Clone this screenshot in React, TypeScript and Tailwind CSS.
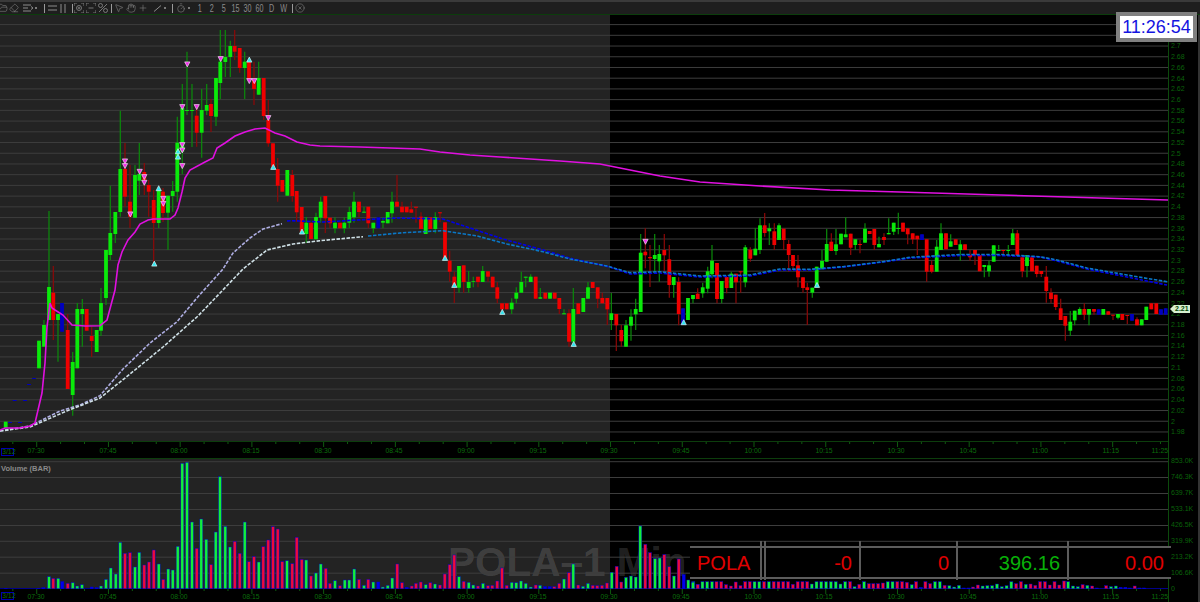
import type { ReactNode } from "react";
import { Hand, MousePointer2, Plus, Timer, CircleX, Eraser, FolderOpen } from "lucide-react";

// [x, kind, body top, body bottom, wick top, wick bottom] in page pixels
type Candle = [number, "g" | "r" | "b", number, number, number?, number?];

const CANDLES: Candle[] = [
  [5.7, "g", 421.7, 427.7], [10, "b", 422, 423], [14.7, "b", 400, 401], [20, "b", 422, 423], [25, "b", 400, 401],
  [29, "b", 384, 385], [34, "b", 378, 379],
  [39, "g", 340.7, 368.3], [44, "g", 325, 346.7, 320], [49, "g", 287, 320, 211], [53.3, "r", 292.7, 320, 266, 340],
  [58, "g", 314, 320, 314, 361.7], [62, "b", 303, 331.7, 303, 331.7], [67.7, "r", 330, 389, 314], [72.7, "g", 362, 395, 352, 415.7],
  [77.3, "g", 309, 368.3, 303], [82.3, "g", 309, 314, 299, 346.7], [86.7, "r", 309, 330.7], [91.7, "r", 336, 341, 326.7, 357],
  [96.7, "g", 330, 352], [101, "g", 303, 330.7, 288, 336], [106, "g", 250, 298, 250, 305],
  [110.3, "g", 233, 255, 185.7, 260], [115.3, "g", 212, 234, 212, 243], [120.3, "g", 169, 212, 110.7, 216.7], [125, "r", 169, 196.7, 143, 206.7],
  [130, "r", 201.7, 216.7, 165, 228], [135, "g", 175, 217.7, 165], [139.3, "g", 174, 180.7, 143, 195], [144.3, "r", 172, 180, 163, 195],
  [148.7, "r", 185, 191.7, 180, 216.7], [153.7, "r", 200, 223, 190, 265], [158.7, "g", 190, 223, 188, 228], [163, "r", 191.7, 213, 188, 222],
  [168, "g", 195.7, 212.7, 195.7, 250], [172.7, "g", 191, 196, 181, 211.7], [177.3, "g", 142.7, 191.7, 116.7, 201.7], [182.3, "g", 108, 151.7, 84, 174],
  [187, "g", 110, 111, 51.7, 115], [192, "g", 110, 111, 84, 147], [196.7, "r", 115.7, 132.7, 107, 146.7], [201.7, "g", 110, 132.7, 89, 157.7],
  [206.7, "g", 105, 110.7, 84, 115], [211, "r", 104, 116, 99, 132], [216, "g", 78, 116.7, 78, 126], [220.3, "g", 61.7, 83, 30, 99],
  [225.3, "g", 57, 62, 30, 77], [230.3, "g", 46, 57, 40.7, 77], [234.7, "r", 46, 51.7, 30, 60], [239.7, "r", 48, 68, 48, 72.7],
  [244.7, "g", 61.7, 68, 51.7, 99], [249, "r", 61.7, 79.3], [254, "r", 80, 89, 61.7, 105], [258.7, "g", 78, 94.7, 61.7],
  [263.7, "r", 78, 116, 78, 120], [268.3, "r", 120, 143.3, 100, 146.7], [273, "r", 143.3, 166.7], [277.7, "r", 169, 185.7, 158, 201.7],
  [282.3, "r", 180, 191.7], [287.3, "g", 170, 195.7], [292.3, "r", 175, 196, 170, 201.7], [296.7, "r", 191, 212.3, 191, 221.7],
  [301.7, "r", 207, 231.7], [306.3, "g", 222.7, 234, 217, 243], [311, "r", 222.7, 239], [316, "g", 217, 239.3, 212.7],
  [320.7, "g", 201.7, 217.7, 196.7, 222.7], [325.3, "r", 196, 218.3, 196, 233], [330, "r", 217.7, 223.3, 217.7, 228], [335, "g", 222.7, 228.3, 217.3, 233.3],
  [340, "r", 222.7, 228.3], [344.3, "g", 222.7, 228.3, 217.3, 233.3], [349.3, "g", 212, 222.7, 206.7, 228], [354, "g", 201.7, 217.3, 191.7, 222.7],
  [359, "r", 201.7, 212, 201.7, 217.3], [364, "g", 211.7, 212.7, 206.7, 212.7], [368.3, "r", 206.7, 223.3, 206.7, 228.3], [373.3, "g", 222.7, 228.3, 222.7, 233.3],
  [378.3, "b", 217.3, 228.3, 217.3, 228.3], [383, "g", 221, 222.7, 217.3, 228.3], [387.7, "g", 212, 223.3], [392, "g", 201.7, 213.3, 191.7, 222.7],
  [397, "r", 201.7, 206.7, 175], [402, "r", 206.7, 212.3, 201.7], [406.7, "r", 206.7, 212.3, 206.7, 212.3], [411.3, "r", 209.3, 212.7, 201.7],
  [416, "r", 206.7, 207.7, 206.7, 222.7], [421, "r", 216.7, 229, 212.3], [425.7, "g", 217.3, 234], [430.3, "r", 217.3, 229],
  [435.3, "g", 217.3, 229, 212.3, 233.3], [440, "r", 212.3, 213.3, 212.3, 222.3], [445, "r", 222.3, 258.3], [449.7, "r", 260.7, 271.7, 250.7, 281.7],
  [454.3, "r", 276.7, 286.7, 271.7, 303], [459, "g", 266, 287.7, 266, 292.7], [463.7, "r", 265.3, 282, 265.3, 292.7], [468.7, "g", 282, 288, 271, 292.7],
  [473.3, "g", 281.3, 282, 276.7, 287.3], [478, "r", 276.7, 282, 276.7, 287.3], [482.7, "g", 271, 282, 266], [488, "r", 271.3, 276.7, 271.3, 281.7],
  [492.7, "r", 276.7, 287.3], [497.3, "r", 287.3, 298.7, 282, 303.3], [502, "r", 303.3, 309.3, 303.3, 314], [506.7, "r", 303.3, 309.3],
  [511.7, "g", 302.7, 309.3, 298.3, 314], [516.3, "g", 292.7, 298.7, 287.3, 303.3], [521.3, "g", 282, 292.7, 271.7], [525.7, "g", 276.7, 277.7, 276.7, 287.3],
  [530.7, "g", 276.7, 282, 274.3], [535.7, "r", 276.7, 298.7], [540.3, "g", 297.3, 298.7, 288, 298.7], [545.3, "r", 292.7, 298.7],
  [550, "g", 292.7, 298.7], [554.7, "r", 292.7, 298.7], [559.3, "r", 298, 309, 298, 314], [564, "g", 313.3, 314.3, 309.3],
  [569, "r", 313.3, 341.7, 309.3, 346.7], [573.3, "g", 309, 341.7, 288, 346], [578.3, "r", 303.3, 314], [583.3, "g", 298, 312],
  [588, "g", 287.3, 298.7, 282], [592.7, "r", 282, 288], [597.7, "r", 287.3, 298.7, 287.3, 308.3], [602.3, "r", 298, 303.3, 292.7], [607.3, "r", 298, 309.3, 298, 325],
  [611.3, "g", 313.3, 320, 293, 330], [616.3, "r", 314, 325.3, 314, 351], [621.3, "r", 330, 341.3, 325, 346.7], [626, "g", 325.3, 346.7, 320],
  [631, "g", 316.7, 325.7, 309.3, 340.7], [635.7, "g", 309, 314.3, 298.7, 330], [640.7, "g", 252.7, 312, 234], [645.3, "r", 251.7, 255.3, 228.3, 268.3],
  [650, "r", 257, 258.3, 245, 287], [654.7, "g", 255, 259, 234, 272], [659.3, "g", 254, 261.3, 245, 281.7], [664.3, "r", 250, 255.3, 234, 272],
  [669.3, "r", 259.3, 285, 245, 297.7], [673.7, "g", 277, 285, 277, 297.7], [678.7, "r", 282, 314, 277.3, 325.3], [683, "b", 308.3, 325, 308.3, 325],
  [688, "g", 298, 320], [693, "g", 295, 299, 295, 303.3], [697.7, "r", 293.7, 299, 288.3], [702.7, "g", 287.3, 293.3, 282.7, 297.7],
  [707.7, "g", 271.3, 288.7, 266.7, 293.3], [712, "g", 260.7, 274.3, 245, 278.3], [717, "r", 263, 299, 263, 303.3], [721.7, "g", 281, 299, 281, 303.3],
  [726.7, "r", 277, 288, 277, 293.3], [731.3, "g", 273.7, 288, 271.7], [736, "r", 273.7, 282.3, 273.7, 303.3], [740.7, "r", 271.3, 272.3, 271.3, 292.7],
  [745.3, "g", 247.3, 282.3, 245, 287.3], [750.3, "r", 249.7, 258.7, 247.3, 261.7], [755.3, "g", 248.7, 255.3, 228.3], [760, "g", 225.3, 250, 218.3, 254],
  [764.7, "r", 225.3, 233, 213, 236.7], [769.3, "g", 228.3, 231.3, 223.3, 245], [774.3, "r", 231.3, 245, 223.3, 250], [779, "g", 225.3, 240, 223.3],
  [783.7, "r", 228.7, 240, 228.7, 250], [788.7, "r", 244, 255, 240, 271.7], [793, "r", 255, 266, 255, 268], [798, "r", 265.3, 277.3, 255, 287.3],
  [803, "r", 277.3, 288, 277.3, 292.7], [807.3, "r", 287.3, 290, 282.7, 325], [812.3, "g", 287.7, 292.7, 287.7, 297.7], [816.7, "g", 266.7, 287.3],
  [822, "g", 261, 269.3, 250], [826.7, "g", 244, 261.7, 229], [831.3, "r", 241.7, 251, 233.3], [836, "g", 244.3, 251, 229, 255],
  [841, "g", 233.7, 244.3], [845.7, "g", 234.3, 237.3, 217.3], [850.7, "r", 233.7, 247.7, 233.7, 255], [855.3, "g", 239.3, 245, 239.3, 250],
  [860, "r", 244, 245, 240, 253.3], [865, "g", 228.7, 242.7, 223.3], [869.7, "r", 231, 234], [874.3, "r", 229, 245, 229, 250],
  [879, "g", 244, 247.3, 236.7], [884, "r", 237, 240, 233.3, 245], [888.7, "g", 233, 234.3, 218.3, 234.3], [893.7, "g", 222.7, 231.7, 222.7, 235],
  [898.3, "g", 228, 229, 212.7, 234.3], [903, "r", 222.7, 231.7], [907.7, "r", 228.3, 234.3, 228.3, 244.3],
  [912.7, "r", 233.3, 239.3, 233.3, 244], [917.3, "r", 235.7, 239.3, 235.7, 255], [922, "b", 234.3, 240, 234.3, 240], [926.7, "r", 239.3, 271.7, 239.3, 281.7],
  [931.7, "r", 265, 271.7, 260.7, 273.3], [936.7, "g", 246.7, 271.7, 240], [941, "g", 233.3, 250, 223.3], [946, "r", 233.3, 249.3],
  [950.7, "g", 241.3, 246.7, 234.3], [955.7, "r", 239.3, 245], [960.3, "g", 244.3, 250, 240, 260.7], [965, "r", 244.3, 250],
  [970, "r", 255, 257.3, 250, 260.7], [975, "r", 250, 255, 250, 265], [979.7, "r", 255, 271.3], [984.3, "g", 265, 267, 265, 277.3],
  [989, "g", 265.3, 271.3, 260.7, 276.7], [993.7, "g", 245.3, 261.7], [998.7, "g", 250, 251, 245], [1003.3, "r", 250, 251, 250, 255],
  [1008.3, "g", 250, 251, 245, 255], [1012.7, "g", 233.3, 245, 229], [1017.3, "r", 233.3, 255, 230], [1022.3, "r", 257.3, 271.3, 257.3, 277.3],
  [1027, "g", 255, 266, 255, 277.3], [1032, "r", 257.3, 271.3], [1036.7, "r", 265.7, 274, 265.7, 277.3], [1041.3, "r", 271, 274, 271, 277],
  [1046.3, "r", 276.7, 291, 266, 302.7], [1051, "r", 292.7, 299, 288.3, 303.3], [1055.7, "r", 294.7, 307, 294.7, 310], [1060.7, "r", 308.3, 320, 298.7],
  [1065.3, "r", 316, 325.7, 316, 340.7], [1070.3, "g", 321.7, 330.7, 311, 336], [1074.7, "g", 310.7, 320.3, 310.7, 325.3], [1079.7, "g", 309, 314.7, 307.3],
  [1084.3, "r", 309, 314.7, 303.3, 320], [1089, "g", 309, 314.7, 309, 325.3], [1094, "r", 309, 311.7, 309, 314.7], [1098.7, "b", 309.3, 314.7, 309.3, 314.7],
  [1103.3, "g", 309, 314.7], [1108.3, "r", 311.3, 314.7], [1113, "r", 314.7, 315.7, 314.7, 320], [1118, "g", 314, 317.7, 314, 319.3],
  [1122.3, "r", 314, 320], [1127.3, "r", 315, 316, 315, 324], [1132, "b", 314, 320.7, 314, 320.7], [1137, "r", 319.3, 325.3, 317.3],
  [1141.7, "g", 319.3, 325.3], [1146.3, "g", 306.7, 320], [1151.3, "r", 303.3, 309.3], [1156.3, "r", 303.3, 314],
  [1161, "b", 309.3, 314.7, 309.3, 314.7], [1165.7, "b", 308.3, 314.7, 308.3, 314.7],
];

const FLAGS_DOWN = [
  [187.3, 64.3], [182.3, 107], [196.7, 107], [220.7, 59], [125, 161.3], [125, 166], [139.7, 171.7], [144.3, 177], [144.3, 182.7],
  [130.3, 214.3], [163.3, 198.7], [163.3, 203.7], [182.3, 145], [182.3, 150.3], [182.3, 166], [249.3, 81], [254.3, 81], [268.3, 118], [645.5, 241.7],
];
const FLAGS_UP = [
  [154.3, 263.7], [158.7, 188.3], [178, 151.3], [178, 156.7], [249.3, 59.7], [273.3, 167], [302, 231.7], [445, 258], [454.3, 285],
  [502.3, 312], [573.7, 344], [683.7, 322.3], [817, 285],
];

const MAGENTA =
  "0,430 5,428 20,428 30,426 35,423 42,393 45,363 47,327 50,303 52,308 55,310 63,315 72,325 85,326 100,325.7 107,320 115,290 118,265 122,252 128,240 135,232 140,224 148,220 153,219 170,219 175,215 178,208 182,192 185,178 190,170 205,162 213,158 217,148 225,143 235,136 245,132 255,129 265,128 275,133 285,136 297,142 310,145 320,146 360,147 420,149 440,152 470,155 500,157 560,161 600,164 620,168 660,176 700,182 760,186 830,190 900,192 1000,195 1100,198 1168,200";
const UPPER_PRE = "0,431 30,426 60,411 80,405 100,395.7 123,369 150,343 177,321.7 198,296.7 223,269 233,253 250,238 263,229 282,223.7";
const LOWER_PRE = "0,431 30,427 66.7,411 100,398 126.7,376.7 163,347 198,316 243,269 267,250 293,244 320,240.7 363,236.7";
const BLUE =
  "287,221 291.7,220.7 323,222 357,220 397,218 443,219 467,227 503,239 543,250 573,259 610,267 630,274 660,273 700,277 750,276 780,270 810,270 843,267 883,262 910,258 960,255.5 1000,255.5 1040,257 1057,261 1087,269 1127,277 1167,285";
const TEAL =
  "368,236 403,232.7 443,230.7 477,236 507,244 543,251.7 570,259 607,266 630,272.7 660,271.7 700,276 750,275 780,269 810,269.3 843,266.7 883,261.7 910,257.3 960,254.5 1000,254.5 1040,256.7 1057,260 1087,268 1127,275 1167,281.7";

type Vol = [number, number, "g" | "r" | "b"];

const volLeft: Vol[] = [
  [18, 445, "b"], [115, 445, "b"], [130, 443, "b"], [147, 410, "g"], [160, 415, "r"], [175, 415, "g"], [187, 425, "b"], [203, 430, "r"], [218, 428, "g"], [232, 438, "g"], [246, 434, "g"],
  [275, 441, "b"], [290, 443, "b"], [303, 438, "g"], [318, 418, "g"], [332, 384, "g"], [347, 402, "g"], [361, 307, "g"], [375, 340, "r"], [390, 338, "r"], [405, 381, "g"], [418, 337, "g"],
  [433, 375, "r"], [447, 366, "r"], [461, 330, "r"], [476, 372, "g"], [490, 418, "r"], [505, 387, "g"], [518, 390, "g"], [533, 319, "g"], [547, 70, "g"], [561, 67, "g"], [576, 246, "g"],
  [590, 325, "r"], [604, 237, "g"], [619, 298, "g"], [633, 374, "r"], [647, 276, "g"], [660, 110, "g"], [676, 259, "g"], [690, 321, "g"], [704, 304, "r"], [719, 340, "r"], [734, 246, "g"],
  [747, 365, "r"], [762, 350, "r"], [776, 366, "g"], [790, 320, "r"], [805, 300, "r"], [819, 260, "r"], [833, 267, "r"], [847, 365, "r"], [861, 362, "g"], [877, 371, "r"], [890, 292, "r"],
  [905, 358, "r"], [919, 360, "g"], [933, 408, "r"], [948, 399, "g"], [962, 372, "g"], [977, 385, "r"], [990, 430, "r"], [1005, 422, "g"], [1020, 437, "r"], [1034, 420, "g"], [1048, 420, "g"],
  [1063, 387, "g"], [1077, 418, "r"], [1092, 436, "g"], [1105, 418, "r"], [1120, 426, "g"], [1135, 426, "b"], [1148, 441, "g"], [1163, 436, "g"], [1177, 414, "g"], [1192, 372, "r"],
];
const volMid: Vol[] = [
  [6, 248, "r"], [20, 262, "b"], [35, 258, "r"], [48, 250, "r"], [62, 246, "r"], [77, 254, "g"], [91, 248, "r"], [105, 252, "g"], [120, 255, "r"], [134, 222, "r"], [149, 194, "r"], [163, 165, "r"],
  [177, 230, "g"], [191, 244, "r"], [206, 247, "g"], [220, 255, "g"], [234, 258, "r"], [249, 250, "g"], [264, 257, "r"], [277, 256, "r"], [292, 243, "r"], [306, 204, "r"], [320, 256, "r"], [335, 247, "g"],
  [349, 248, "g"], [363, 243, "g"], [377, 250, "g"], [392, 261, "g"], [407, 255, "r"], [420, 256, "g"], [435, 260, "b"], [449, 260, "b"], [463, 260, "r"], [478, 250, "r"], [492, 237, "g"], [507, 218, "r"],
  [520, 192, "g"], [535, 255, "r"], [549, 259, "g"], [564, 250, "g"], [578, 256, "r"], [592, 257, "r"], [606, 256, "r"], [621, 249, "r"], [635, 217, "g"], [650, 199, "r"], [664, 246, "r"], [678, 232, "g"],
  [693, 228, "g"], [707, 231, "g"], [721, 78, "g"], [736, 133, "r"], [750, 158, "r"], [765, 176, "g"], [779, 174, "g"], [793, 164, "r"], [808, 200, "r"], [822, 228, "g"], [836, 177, "r"], [851, 224, "b"],
  [865, 240, "g"], [880, 245, "g"], [893, 253, "r"],
];
const volRight: Vol[] = [
  [96, 428, "g"], [110, 434, "r"], [124, 425, "g"], [138, 425, "g"], [152, 425, "g"], [165, 425, "r"], [179, 425, "r"], [193, 434, "r"], [207, 438, "r"], [221, 426, "r"], [235, 437, "r"], [249, 425, "r"],
  [262, 425, "r"], [276, 425, "g"], [290, 425, "g"], [304, 425, "r"], [318, 425, "g"], [332, 425, "r"], [346, 425, "r"], [360, 425, "r"], [374, 425, "r"], [388, 433, "r"], [402, 425, "r"], [416, 425, "r"],
  [430, 425, "r"], [443, 432, "g"], [457, 425, "g"], [471, 425, "g"], [485, 425, "g"], [499, 425, "g"], [513, 425, "g"], [527, 432, "g"], [541, 425, "g"], [555, 425, "r"], [568, 440, "g"], [582, 433, "r"],
  [596, 425, "g"], [610, 431, "r"], [623, 431, "r"], [637, 431, "r"], [651, 429, "r"], [665, 425, "g"], [679, 425, "g"], [693, 425, "r"], [707, 425, "r"], [721, 427, "r"], [735, 434, "g"], [748, 425, "r"],
  [762, 442, "b"], [775, 425, "r"], [789, 431, "r"], [803, 425, "g"], [817, 425, "g"], [831, 436, "r"], [845, 437, "g"], [859, 441, "g"], [873, 436, "g"], [887, 444, "b"], [901, 444, "b"], [914, 441, "r"],
  [928, 435, "r"], [942, 438, "g"], [956, 437, "g"], [970, 437, "g"], [984, 432, "g"], [998, 440, "g"], [1012, 437, "g"], [1026, 425, "g"], [1040, 431, "r"], [1054, 425, "r"], [1068, 433, "g"], [1082, 432, "r"],
  [1096, 436, "r"], [1110, 425, "r"], [1124, 425, "r"], [1138, 435, "r"], [1152, 425, "r"], [1166, 435, "r"], [1180, 423, "r"], [1192, 425, "g"], [1206, 438, "g"], [1220, 440, "g"], [1234, 434, "r"], [1248, 436, "g"],
  [1262, 438, "r"], [1276, 444, "b"], [1303, 437, "r"], [1317, 440, "g"], [1331, 438, "g"], [1345, 442, "b"], [1359, 442, "b"], [1372, 444, "b"], [1386, 438, "r"], [1400, 444, "b"], [1414, 444, "b"],
];

const VOLUME_BARS: Vol[] = [
  ...volLeft.map(([x, y, k]): Vol => [x / 3, 440 + y / 3, k]),
  ...volMid.map(([x, y, k]): Vol => [400 + x / 3, 500 + y / 3, k]),
  ...volRight.map(([x, y, k]): Vol => [660 + x / 2.92, 440 + y / 3, k]),
];

const PRICE_ROWS = Array.from({ length: 37 }, (_, i) => String(parseFloat((2.7 - i * 0.02).toFixed(2))));
const VOLUME_LABELS = ["853.0K", "746.3K", "639.7K", "533.1K", "426.5K", "319.9K", "213.2K", "106.6K", "0"];
const TIMES = ["07:30", "07:45", "08:00", "08:15", "08:30", "08:45", "09:00", "09:15", "09:30", "09:45", "10:00", "10:15", "10:30", "10:45", "11:00", "11:15"];

const BODY = { g: "#0aea0a", r: "#f00000", b: "#0000c0" };
const WICK = { g: "#0a8c0a", r: "#8e0808", b: "#000088" };
const VOL_FILL = { g: "#12f03a", r: "#ee0a3c", b: "#0000ee" };

function CandleChart() {
  const grid = Array.from({ length: 39 }, (_, i) => 24.6 + i * 10.72);
  return (
    <svg width={1168} height={426} viewBox="0 15 1168 426" className="block">
      <rect x={0} y={15} width={610} height={426} fill="#232323" />
      {grid.map((y) => (
        <line key={y} x1={0} x2={1168} y1={y} y2={y} stroke="#3d3d3d" />
      ))}
      {CANDLES.map(([x, k, top, bottom, wickTop, wickBottom]) => (
        <g key={x}>
          <line x1={x} x2={x} y1={wickTop ?? top} y2={wickBottom ?? bottom} stroke={WICK[k]} strokeWidth={1.2} />
          <rect x={x - 1.9} y={top} width={3.8} height={bottom - top} fill={BODY[k]} />
        </g>
      ))}
      <polyline points={UPPER_PRE} fill="none" stroke="#aeaee2" strokeWidth={1.6} strokeDasharray="3.5 1.5" />
      <polyline points={LOWER_PRE} fill="none" stroke="#cfe0e6" strokeWidth={1.6} strokeDasharray="3.5 1.5" />
      <polyline points={BLUE} fill="none" stroke="#0000e6" strokeWidth={1.6} strokeDasharray="3.5 1.5" />
      <polyline points={TEAL} fill="none" stroke="#0a78c8" strokeWidth={1.6} strokeDasharray="3.5 1.5" />
      <polyline points={MAGENTA} fill="none" stroke="#e010e0" strokeWidth={1.6} />
      {FLAGS_DOWN.map(([x, y]) => (
        <polygon key={`${x}-${y}`} points={`${x - 2.6},${y - 2.4} ${x + 2.6},${y - 2.4} ${x},${y + 2.6}`} fill="#f02ee8" stroke="#f4d8f4" strokeWidth={0.7} />
      ))}
      {FLAGS_UP.map(([x, y]) => (
        <polygon key={`${x}-${y}`} points={`${x - 2.6},${y + 2.4} ${x + 2.6},${y + 2.4} ${x},${y - 2.6}`} fill="#2ee6f0" stroke="#d8f4f4" strokeWidth={0.7} />
      ))}
    </svg>
  );
}

function VolumeChart() {
  const grid = [461.7, 477.5, 493.5, 509.5, 525.5, 541.3, 557.2, 573.2];
  return (
    <svg width={1168} height={130} viewBox="0 459 1168 130" className="absolute inset-0 block">
      {grid.map((y) => (
        <line key={y} x1={0} x2={1168} y1={y} y2={y} stroke="#3d3d3d" />
      ))}
      <line x1={0} x2={1168} y1={588.5} y2={588.5} stroke="#00008a" />
      {VOLUME_BARS.map(([x, y, k]) => (
        <rect key={x} x={x - 1.5} y={y} width={3} height={588.7 - y} fill={VOL_FILL[k]} stroke="#0000d0" strokeWidth={0.45} />
      ))}
    </svg>
  );
}

function TimeAxis({ className }: { className: string }) {
  const ticks = Array.from({ length: 49 }, (_, i) => 36.7 - 23.9 + i * 23.91);
  return (
    <div className={`relative flex w-[1168px] ${className}`}>
      <svg width={1168} height={6} className="absolute left-0 top-0">
        {ticks.map((x, i) => (
          <line key={x} x1={x} x2={x} y1={0} y2={(i + 2) % 3 === 0 ? 5 : 2} stroke="#0f5a0f" />
        ))}
      </svg>
      <span className="absolute left-px bottom-[2px] h-[8px] w-[13px] border border-[#0000b0] text-center text-[7px] leading-[6px] text-[#0a6a0a]">3/12</span>
      {TIMES.map((t) => (
        <span key={t} className="w-[71.7px] shrink-0 text-center text-[8px] leading-none text-[#0b6e0b] first:ml-px">
          <span className="inline-block scale-x-[.85]">{t}</span>
        </span>
      ))}
      <span className="w-[26px] shrink-0 text-center text-[8px] leading-none text-[#0b6e0b]">
        <span className="inline-block scale-x-[.85]">11:25</span>
      </span>
    </div>
  );
}

function Cell({ children, className = "" }: { children: ReactNode; className?: string }) {
  return <span className={`flex h-full w-3 shrink-0 items-center justify-center text-[10px] text-[#8c8c8c] ${className}`}>{children}</span>;
}

function Sep({ className = "" }: { className?: string }) {
  return <span className={`h-[9px] w-px shrink-0 bg-[#9a9a9a] ${className}`} />;
}

function Dot() {
  return <span className="flex h-full w-1 shrink-0 items-center justify-center"><span className="h-[2px] w-[2px] rounded-full bg-[#9a9a9a]" /></span>;
}

function Num({ label }: { label: string }) {
  return (
    <Cell>
      <span className="inline-block scale-x-[.72]">{label}</span>
    </Cell>
  );
}

function Toolbar() {
  const icon = { size: 10, strokeWidth: 1.3 };
  return (
    <div className="flex h-[15px] items-center overflow-hidden border-t-2 border-b border-t-[#3a3a3a] border-b-[#0c3d0c] bg-[#1e1e1e]">
      <Cell className="-ml-[3px]"><FolderOpen {...icon} /></Cell>
      <Cell className="-ml-px"><Eraser {...icon} /></Cell>
      <Cell className="ml-[2px]">
        <svg width="10" height="8" viewBox="0 0 10 8" fill="none" stroke="currentColor"><path d="M0 1h8M0 4h5M0 7h8M8 2.5l2 1.5-2 1.5" /></svg>
      </Cell>
      <Dot />
      <Sep className="ml-[6px]" />
      <Cell className="ml-px">
        <svg width="9" height="6" viewBox="0 0 9 6" fill="none" stroke="currentColor"><path d="M0 1h9M0 5h9" /></svg>
      </Cell>
      <Cell className="-ml-px">
        <svg width="6" height="9" viewBox="0 0 6 9" fill="none" stroke="currentColor"><path d="M1 0v9M5 0v9" /></svg>
      </Cell>
      <Sep className="ml-[3px]" />
      <Cell>
        <svg width="10" height="10" viewBox="0 0 10 10" fill="none" stroke="currentColor" strokeWidth=".8"><path d="M0 3V0h3M7 0h3v3M0 7v3h3M7 10h3V7" /><circle cx="5" cy="5" r="2.5" /><path d="M3.8 5h2.4M5 3.8v2.4" /></svg>
      </Cell>
      <Cell>
        <svg width="10" height="10" viewBox="0 0 10 10" fill="none" stroke="currentColor" strokeWidth=".8"><path d="M0 3V0h3M7 0h3v3M0 7v3h3M7 10h3V7M2.5 5h5" /></svg>
      </Cell>
      <Cell>
        <svg width="10" height="10" viewBox="0 0 10 10" fill="none" stroke="currentColor" strokeWidth=".8"><path d="M1 9L9 1" /><circle cx="2.5" cy="2.5" r="2" /><circle cx="7.5" cy="7.5" r="2" /></svg>
      </Cell>
      <Sep className="ml-[2px]" />
      <Cell className="ml-px"><MousePointer2 {...icon} /></Cell>
      <Cell><Hand {...icon} /></Cell>
      <Cell><Plus {...icon} /></Cell>
      <Cell className="ml-[2px]">
        <svg width="9" height="7" viewBox="0 0 9 7" fill="none" stroke="currentColor"><path d="M1 6.5L8 .5" /></svg>
      </Cell>
      <Dot />
      <Sep className="ml-[5px]" />
      <Cell className="ml-[2px]"><Timer {...icon} /></Cell>
      <Dot />
      <span className="ml-[3px] flex h-full">
        {["1", "2", "5", "15", "30", "60", "D", "W"].map((n) => (
          <Num key={n} label={n} />
        ))}
      </span>
      <Sep className="ml-[2px]" />
      <Cell className="ml-px"><CircleX {...icon} /></Cell>
    </div>
  );
}

function Tick() {
  return <span className="absolute -top-[7px] -bottom-[3px] left-0 w-[2px] bg-[#5c5c5c]" />;
}

function QuoteCell({ children, width, className }: { children: ReactNode; width: string; className: string }) {
  return (
    <div className={`relative flex h-full items-center justify-end pr-[7px] text-[20px] leading-none ${width} ${className}`}>
      <Tick />
      {children}
    </div>
  );
}

function QuoteBar() {
  return (
    <div className="absolute left-[690px] top-[87px] flex h-[33px] w-[481px] border-y-2 border-[#5c5c5c] bg-black">
      <div className="flex h-full w-[70px] items-center pl-[7px] text-[20px] leading-none text-[#e00000]">POLA</div>
      <div className="relative h-full w-[4px]"><Tick /></div>
      <QuoteCell width="w-[95px]" className="text-[#e00000]">-0</QuoteCell>
      <QuoteCell width="w-[97px]" className="text-[#e00000]">0</QuoteCell>
      <QuoteCell width="w-[111px]" className="text-[#08b008]">396.16</QuoteCell>
      <QuoteCell width="flex-1" className="text-[#e00000]">0.00</QuoteCell>
    </div>
  );
}

export default function App() {
  return (
    <div className="relative h-[602px] w-[1200px] overflow-hidden bg-black font-['Liberation_Sans',Arial,sans-serif]">
      <Toolbar />

      <div className="flex">
        <div className="w-[1168px] shrink-0">
          <CandleChart />
          <TimeAxis className="h-[18px] items-center border-y border-[#0c3d0c] pt-[2px]" />
          <div className="relative h-[130px] w-[1168px] bg-[linear-gradient(to_right,#232323_610px,#000_610px)]">
            <span className="absolute left-[448px] top-[83px] text-[40.5px] font-bold leading-none whitespace-nowrap text-white/15">POLA–1 Min</span>
            <VolumeChart />
            <span className="absolute left-[1px] top-[4px] text-[7.5px] font-bold text-[#8a8a8a]">Volume (BAR)</span>
            <QuoteBar />
          </div>
          <TimeAxis className="h-[13px] items-end pb-px" />
        </div>

        <div className="flex-1 border-l border-r-2 border-l-[#0c4a0c] border-r-[#333] pl-[2px] text-[8px] leading-none text-[#0a620a]">
          <div className="h-[426px] pt-[26px]">
            {PRICE_ROWS.map((p) => (
              <div key={p} className="flex h-[10.72px] items-center">
                <span className="origin-left scale-x-[.88]">{p}</span>
              </div>
            ))}
          </div>
          <div className="h-[18px]" />
          <div className="-mt-[6px]">
            {VOLUME_LABELS.map((v) => (
              <div key={v} className="flex h-[16px] items-center">
                <span className="origin-left scale-x-[.88]">{v}</span>
              </div>
            ))}
          </div>
        </div>
      </div>

      {/* clock and last price tag sit over the axis */}
      <div className="absolute left-[1116px] top-[12px] flex h-[30px] w-[81px] items-center justify-center border-4 border-[#808080] bg-white text-[18px] leading-none text-[#1414e0]">
        11:26:54
      </div>
      <div className="absolute left-[1170px] top-[305px] flex h-[8px] items-center">
        <span className="h-0 w-0 border-y-[4px] border-r-[4px] border-y-transparent border-r-[#d6efcf]" />
        <span className="h-[8px] bg-[#d6efcf] px-px text-[7px] font-bold leading-[8px] text-[#064a06]">2.21</span>
      </div>
    </div>
  );
}
